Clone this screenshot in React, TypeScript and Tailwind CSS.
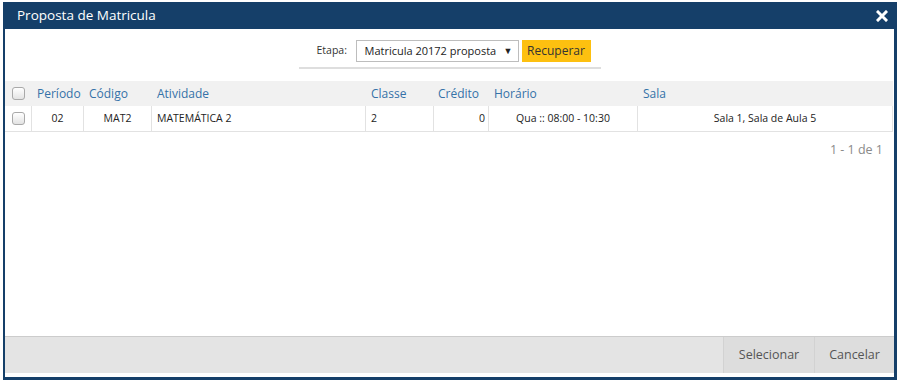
import { useState } from 'react'

const cols = 'grid-cols-[26px_52px_68px_214px_68px_55px_149px_256px]'

function Check() {
  return (
    <span className="block h-[13px] w-[13px] rounded-[3px] border border-[#a9a9a9] bg-[linear-gradient(180deg,#ffffff,#e3e3e3)]" />
  )
}

export default function App() {
  const [etapa] = useState('Matricula 20172 proposta')

  return (
    <div className="h-[381px] w-[898px] bg-white pl-[3px] pt-[2px] font-['Open_Sans',sans-serif]">
      <div className="flex h-[378px] w-[894px] flex-col bg-[#153f69]">
        {/* Title bar */}
        <div className="flex h-[27px] shrink-0 items-center justify-between pl-[14px] pr-[9px]">
          <span className="text-[13.5px] text-white">Proposta de Matricula</span>
          <svg width="12" height="12" viewBox="0 0 12 12">
            <path d="M2 2l8 8M10 2l-8 8" stroke="white" strokeWidth="3" strokeLinecap="square" />
          </svg>
        </div>

        {/* Body */}
        <div className="mb-[3px] ml-[2px] mr-[3px] flex flex-1 flex-col bg-white pb-[4px]">
          {/* Etapa filter */}
          <div className="mx-auto mt-[11px] flex w-[302px] items-center border-b-2 border-[#dedede] pb-[5px] pl-[18px]">
            <span className="w-[28px] text-[10.5px] text-[#333]">Etapa:</span>
            <div className="ml-[11px] flex h-[22px] w-[163px] shrink-0 items-center justify-between border border-[#bdbdbd] pl-[8px] pr-[5px] text-[11px] text-[#222]">
              <span className="whitespace-nowrap">{etapa}</span>
              <span className="text-[9px]">▼</span>
            </div>
            <button className="ml-[3px] h-[22px] w-[69px] shrink-0 bg-[#fdc010] text-[12px] text-[#333]">Recuperar</button>
          </div>

          {/* Table */}
          <div className="mt-[12px] w-[888px] text-[10.5px]">
            <div className={`grid ${cols} h-[25px] items-center bg-[#f1f1f1] text-[12px] text-[#3572a8]`}>
              <div className="flex justify-center"><Check /></div>
              <div className="pl-[6px]">Período</div>
              <div className="pl-[6px]">Código</div>
              <div className="pl-[6px]">Atividade</div>
              <div className="pl-[6px]">Classe</div>
              <div className="pl-[5px]">Crédito</div>
              <div className="pl-[6px]">Horário</div>
              <div className="pl-[6px]">Sala</div>
            </div>
            <div className={`grid ${cols} h-[26px] border-b border-[#e2e2e2] text-[#222]`}>
              <div className="flex items-center justify-center"><Check /></div>
              <div className="flex items-center justify-center border-l border-[#e2e2e2]">02</div>
              <div className="flex items-center justify-center border-l border-[#e2e2e2]">MAT2</div>
              <div className="flex items-center border-l border-[#e2e2e2] pl-[5px]">MATEMÁTICA 2</div>
              <div className="flex items-center border-l border-[#e2e2e2] pl-[5px]">2</div>
              <div className="flex items-center justify-end border-l border-[#e2e2e2] pr-[3px]">0</div>
              <div className="flex items-center justify-center border-l border-[#e2e2e2]">Qua :: 08:00 - 10:30</div>
              <div className="flex items-center justify-center border-x border-[#e2e2e2]">Sala 1, Sala de Aula 5</div>
            </div>
          </div>

          <div className="pr-[11px] pt-[9px] text-right text-[12.5px] text-[#8a8a8a]">1 - 1 de 1</div>

          {/* Footer */}
          <div className="mt-auto flex h-[37px] justify-end border-t border-[#cccccc] bg-[#e4e4e4]">
            <button className="w-[91px] border-l border-[#d2d2d2] bg-[#dddddd] text-[12.5px] text-[#555]">Selecionar</button>
            <button className="w-[80px] border-l border-[#d2d2d2] bg-[#dddddd] text-[12.5px] text-[#555]">Cancelar</button>
          </div>
        </div>
      </div>
    </div>
  )
}
